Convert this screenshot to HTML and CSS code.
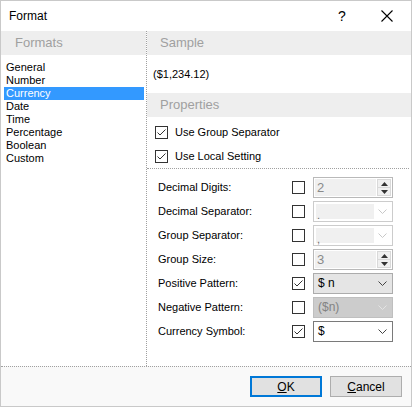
FILE: index.html
```html
<!DOCTYPE html>
<html>
<head>
<meta charset="utf-8">
<link rel="stylesheet" href="styles.css">
</head>
<body>
<div class="window">
  <div class="titlebar">
    <span class="title">Format</span>
    <span class="help">?</span>
    <span class="close"><svg width="12" height="12" viewBox="0 0 12 12"><path d="M0.5 0.5 L11.5 11.5 M11.5 0.5 L0.5 11.5" stroke="#000" stroke-width="1.1" fill="none"/></svg></span>
  </div>
  <div class="main">
    <div class="left">
      <div class="band">Formats</div>
      <ul class="list">
        <li>General</li>
        <li>Number</li>
        <li class="selected">Currency</li>
        <li>Date</li>
        <li>Time</li>
        <li>Percentage</li>
        <li>Boolean</li>
        <li>Custom</li>
      </ul>
    </div>
    <div class="right">
      <div class="band">Sample</div>
      <div class="sample">($1,234.12)</div>
      <div class="band">Properties</div>
      <div class="checks">
        <div class="check-row"><span class="cb checked"><svg width="11" height="11" viewBox="0 0 11 11"><path d="M1.5 5.5 L4 8 L9.5 2.5" stroke="#333" stroke-width="1" fill="none"/></svg></span><span>Use Group Separator</span></div>
        <div class="check-row"><span class="cb checked"><svg width="11" height="11" viewBox="0 0 11 11"><path d="M1.5 5.5 L4 8 L9.5 2.5" stroke="#333" stroke-width="1" fill="none"/></svg></span><span>Use Local Setting</span></div>
      </div>
      <div class="props">
        <span class="label">Decimal Digits:</span>
        <span class="cb"></span>
        <div class="spin">
          <span class="field">2</span>
          <span class="spinbtns">
            <span class="sb"><svg width="7" height="4" viewBox="0 0 7 4"><path d="M0 4 L3.5 0 L7 4 Z" fill="#333"/></svg></span>
            <span class="sb"><svg width="7" height="4" viewBox="0 0 7 4"><path d="M0 0 L3.5 4 L7 0 Z" fill="#333"/></svg></span>
          </span>
        </div>

        <span class="label">Decimal Separator:</span>
        <span class="cb"></span>
        <div class="combo disabled-light">
          <span class="field">.</span>
          <span class="chev"><svg width="9" height="5" viewBox="0 0 9 5"><path d="M0.5 0.5 L4.5 4.5 L8.5 0.5" stroke="#c8c8c8" fill="none"/></svg></span>
        </div>

        <span class="label">Group Separator:</span>
        <span class="cb"></span>
        <div class="combo disabled-light">
          <span class="field">,</span>
          <span class="chev"><svg width="9" height="5" viewBox="0 0 9 5"><path d="M0.5 0.5 L4.5 4.5 L8.5 0.5" stroke="#c8c8c8" fill="none"/></svg></span>
        </div>

        <span class="label">Group Size:</span>
        <span class="cb"></span>
        <div class="spin">
          <span class="field">3</span>
          <span class="spinbtns">
            <span class="sb"><svg width="7" height="4" viewBox="0 0 7 4"><path d="M0 4 L3.5 0 L7 4 Z" fill="#333"/></svg></span>
            <span class="sb"><svg width="7" height="4" viewBox="0 0 7 4"><path d="M0 0 L3.5 4 L7 0 Z" fill="#333"/></svg></span>
          </span>
        </div>

        <span class="label">Positive Pattern:</span>
        <span class="cb checked"><svg width="11" height="11" viewBox="0 0 11 11"><path d="M1.5 5.5 L4 8 L9.5 2.5" stroke="#333" stroke-width="1" fill="none"/></svg></span>
        <div class="combo enabled-gray">
          <span class="value">$ n</span>
          <span class="chev"><svg width="9" height="5" viewBox="0 0 9 5"><path d="M0.5 0.5 L4.5 4.5 L8.5 0.5" stroke="#444" fill="none"/></svg></span>
        </div>

        <span class="label">Negative Pattern:</span>
        <span class="cb"></span>
        <div class="combo disabled-dark">
          <span class="value">($n)</span>
          <span class="chev"><svg width="9" height="5" viewBox="0 0 9 5"><path d="M0.5 0.5 L4.5 4.5 L8.5 0.5" stroke="#e4e4e4" fill="none"/></svg></span>
        </div>

        <span class="label">Currency Symbol:</span>
        <span class="cb checked"><svg width="11" height="11" viewBox="0 0 11 11"><path d="M1.5 5.5 L4 8 L9.5 2.5" stroke="#333" stroke-width="1" fill="none"/></svg></span>
        <div class="combo enabled-white">
          <span class="value">$</span>
          <span class="chev"><svg width="9" height="5" viewBox="0 0 9 5"><path d="M0.5 0.5 L4.5 4.5 L8.5 0.5" stroke="#444" fill="none"/></svg></span>
        </div>
      </div>
    </div>
  </div>
  <div class="footer">
    <button class="btn default"><u>O</u>K</button>
    <button class="btn"><u>C</u>ancel</button>
  </div>
</div>
</body>
</html>
```

FILE: styles.css
```css
* { box-sizing: border-box; }
html, body { margin: 0; padding: 0; background: #fff; }
body { font-family: "Liberation Sans", Arial, sans-serif; font-size: 11px; color: #000; }

.window {
  width: 412px;
  height: 407px;
  border: 1px solid #c9c9c9;
  display: flex;
  flex-direction: column;
  background: #fff;
}

.titlebar {
  height: 30px;
  display: flex;
  align-items: center;
  padding-left: 8px;
  flex: none;
}
.title { font-size: 12px; flex: 1; padding-bottom: 1px; }
.help { font-size: 14px; width: 14px; margin-right: 32px; text-align: center; }
.close { width: 12px; height: 12px; margin-right: 18px; display: flex; }

.main {
  flex: 1;
  display: grid;
  grid-template-columns: 146px 1fr;
  min-height: 0;
}

.left { border-right: 1px dotted #a0a0a0; }
.right { display: flex; flex-direction: column; }

.band {
  height: 24px;
  background: #eeeeee;
  color: #a0a0a0;
  font-size: 13px;
  line-height: 24px;
  padding-left: 14px;
}
.right .band { padding-left: 13px; }

.list {
  list-style: none;
  margin: 6px 2px 0 3px;
  padding: 0;
}
.list li {
  height: 13px;
  line-height: 13px;
  padding-left: 2px;
}
.list li.selected { background: #3399ff; color: #fff; }

.sample {
  height: 38px;
  line-height: 38px;
  padding-left: 6px;
}

.checks {
  padding: 3px 2px 0 0;
  border-bottom: 1px dotted #a0a0a0;
  margin-right: 2px;
  height: 52px;
}
.check-row {
  height: 24px;
  display: flex;
  align-items: center;
  padding-left: 8px;
  gap: 7px;
}

.cb {
  width: 13px;
  height: 13px;
  border: 1px solid #333;
  background: #fff;
  display: flex;
  align-items: center;
  justify-content: center;
}

.props {
  padding: 8px 0 0 11px;
  display: grid;
  grid-template-columns: 126px 13px 80px;
  column-gap: 8px;
  row-gap: 3px;
  grid-auto-rows: 21px;
  align-items: center;
}
.label { line-height: 21px; white-space: nowrap; }

.spin, .combo {
  height: 21px;
  display: flex;
  align-items: stretch;
  border: 1px solid #cccccc;
  background: #fff;
}
.spin { border-color: #b9b9b9; padding: 1px; }
.spin .field {
  flex: 1;
  background: #f0f0f0;
  color: #8a8a8a;
  font-size: 13px;
  line-height: 17px;
  padding-left: 2px;
}
.spinbtns {
  width: 14px;
  display: flex;
  flex-direction: column;
  border: 1px solid #d9d9d9;
  background: #f0f0f0;
  margin-left: 1px;
}
.sb {
  flex: 1;
  display: flex;
  align-items: center;
  justify-content: center;
}
.sb + .sb { border-top: 1px solid #d9d9d9; }

.combo .chev {
  width: 18px;
  display: flex;
  align-items: center;
  justify-content: center;
  padding-right: 1px;
}
.combo.disabled-light { padding: 2px 0 2px 2px; }
.combo.disabled-light .field {
  flex: 1;
  background: #f0f0f0;
  color: #6d6d6d;
  font-size: 11px;
  line-height: 22px;
  padding-left: 1px;
}
.combo .value {
  flex: 1;
  padding-left: 4px;
  font-size: 12px;
  line-height: 19px;
}
.combo.enabled-gray { background: #e5e5e5; border-color: #acacac; }
.combo.disabled-dark { background: #cccccc; border-color: #bfbfbf; }
.combo.disabled-dark .value { color: #838383; }
.combo.enabled-white { border-color: #7a7a7a; }

.footer {
  flex: none;
  height: 40px;
  border-top: 1px dotted #a0a0a0;
  background: #f9f9f9;
  display: flex;
  justify-content: flex-end;
  align-items: center;
  gap: 8px;
  padding: 0 9px 0 0;
}
.btn {
  width: 72px;
  height: 21px;
  background: #e1e1e1;
  border: 1px solid #adadad;
  font-family: "Liberation Sans", Arial, sans-serif;
  font-size: 12px;
  color: #000;
  padding: 0;
  margin: 0;
}
.btn.default { border: 2px solid #0078d7; }
```
